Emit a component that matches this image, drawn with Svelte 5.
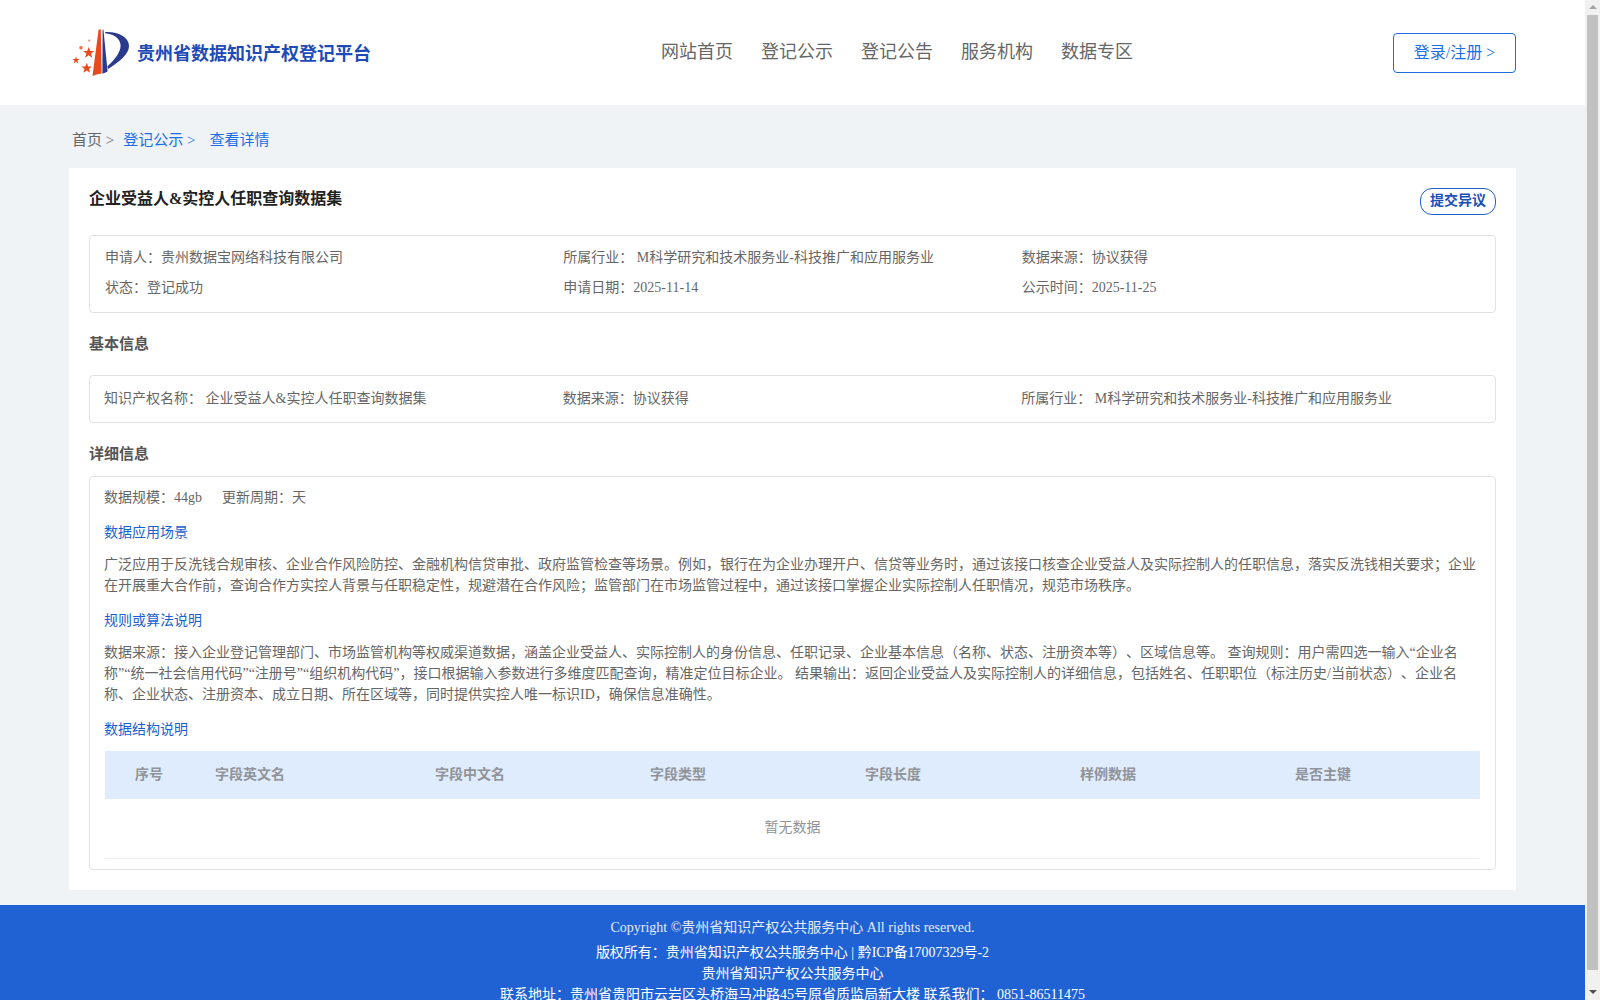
<script>
  const navItems = ['网站首页', '登记公示', '登记公告', '服务机构', '数据专区'];

  const summary = [
    { label: '申请人：', value: '贵州数据宝网络科技有限公司' },
    { label: '所属行业：', value: ' M科学研究和技术服务业-科技推广和应用服务业' },
    { label: '数据来源：', value: '协议获得' },
    { label: '状态：', value: '登记成功' },
    { label: '申请日期：', value: '2025-11-14' },
    { label: '公示时间：', value: '2025-11-25' }
  ];

  const basics = [
    { label: '知识产权名称：', value: ' 企业受益人&实控人任职查询数据集' },
    { label: '数据来源：', value: '协议获得' },
    { label: '所属行业：', value: ' M科学研究和技术服务业-科技推广和应用服务业' }
  ];

  const columns = ['序号', '字段英文名', '字段中文名', '字段类型', '字段长度', '样例数据', '是否主键'];
</script>

<div class="window">
  <div class="page">
    <header class="header">
      <a class="brand" href="#top">
        <svg class="logo" viewBox="70 26 62 54" aria-hidden="true">
          <g fill="#e8491d">
            <path d="M98.6 29.5 L100.8 29.5 L101.6 73.5 Q96 74 92.5 76 Z" />
            <path d="M88.7 47 L90.2 51 L94.4 51 L91 53.6 L92.3 57.8 L88.7 55.2 L85.1 57.8 L86.4 53.6 L83 51 L87.2 51 Z" />
            <path d="M76 56.4 L76.9 59 L79.6 59 L77.4 60.7 L78.2 63.4 L76 61.8 L73.8 63.4 L74.6 60.7 L72.4 59 L75.1 59 Z" />
            <path d="M86.7 63 L88.1 66.6 L91.9 66.6 L88.9 69 L90 72.8 L86.7 70.6 L83.4 72.8 L84.5 69 L81.5 66.6 L85.3 66.6 Z" />
            <circle cx="81" cy="47.7" r="1.8" opacity="0.8" />
            <circle cx="89.3" cy="40.7" r="1.1" opacity="0.6" />
          </g>
          <g fill="#2a3a8f">
            <path d="M102.6 29.5 L103.4 29.5 L107.6 71.5 Q105 72.8 102.4 73.8 Z" />
            <path d="M105.2 32 C119 31.4 129 37.4 129 46 C129 54.5 118.5 62.5 108 69 L107.4 66.6 C114.4 60 120.6 52.6 120.6 45.6 C120.6 38.6 113.5 33.8 105.2 33.2 Z" />
          </g>
        </svg>
        <span class="brand-name">贵州省数据知识产权登记平台</span>
      </a>
      <nav class="nav">
        {#each navItems as item}
          <a href="#top">{item}</a>
        {/each}
      </nav>
      <a class="login" href="#top">登录/注册 &gt;</a>
    </header>

    <main class="main">
      <div class="crumbs">
        <span class="crumb-home">首页 &gt;</span>
        <a href="#top">登记公示 &gt;</a>
        <a href="#top">查看详情</a>
      </div>

      <section class="card">
        <div class="card-head">
          <h1>企业受益人&amp;实控人任职查询数据集</h1>
          <button type="button" class="dispute">提交异议</button>
        </div>

        <div class="box summary">
          {#each summary as item}
            <div>{item.label}{item.value}</div>
          {/each}
        </div>

        <h2 class="first">基本信息</h2>
        <div class="box basics">
          {#each basics as item}
            <div>{item.label}{item.value}</div>
          {/each}
        </div>

        <h2 class="second">详细信息</h2>
        <div class="box detail">
          <div class="meta">
            <span>数据规模：44gb</span>
            <span>更新周期：天</span>
          </div>

          <h3>数据应用场景</h3>
          <p>广泛应用于反洗钱合规审核、企业合作风险防控、金融机构信贷审批、政府监管检查等场景。例如，银行在为企业办理开户、信贷等业务时，通过该接口核查企业受益人及实际控制人的任职信息，落实反洗钱相关要求；企业在开展重大合作前，查询合作方实控人背景与任职稳定性，规避潜在合作风险；监管部门在市场监管过程中，通过该接口掌握企业实际控制人任职情况，规范市场秩序。</p>

          <h3>规则或算法说明</h3>
          <p>数据来源：接入企业登记管理部门、市场监管机构等权威渠道数据，涵盖企业受益人、实际控制人的身份信息、任职记录、企业基本信息（名称、状态、注册资本等）、区域信息等。 查询规则：用户需四选一输入“企业名称”“统一社会信用代码”“注册号”“组织机构代码”，接口根据输入参数进行多维度匹配查询，精准定位目标企业。 结果输出：返回企业受益人及实际控制人的详细信息，包括姓名、任职职位（标注历史/当前状态）、企业名称、企业状态、注册资本、成立日期、所在区域等，同时提供实控人唯一标识ID，确保信息准确性。</p>

          <h3>数据结构说明</h3>
          <div class="table">
            <div class="table-head">
              {#each columns as col}
                <div>{col}</div>
              {/each}
            </div>
            <div class="table-empty">暂无数据</div>
          </div>
        </div>
      </section>
    </main>

    <footer class="footer">
      <div class="copyright">Copyright ©贵州省知识产权公共服务中心 All rights reserved.</div>
      <div>版权所有：贵州省知识产权公共服务中心 | 黔ICP备17007329号-2</div>
      <div>贵州省知识产权公共服务中心</div>
      <div>联系地址：贵州省贵阳市云岩区头桥海马冲路45号原省质监局新大楼 联系我们： 0851-86511475</div>
    </footer>
  </div>

  <!-- page scrollbar as the browser drew it -->
  <div class="scrollbar" aria-hidden="true">
    <span class="arrow up"></span>
    <span class="thumb"></span>
    <span class="arrow down"></span>
  </div>
</div>

<style>
  :global(body) {
    margin: 0;
    overflow: hidden;
    font-family: "Liberation Serif", "Noto Sans CJK SC", serif;
    font-size: 14px;
    line-height: 21px;
    color: #666;
    text-spacing-trim: space-all;
  }

  a {
    color: inherit;
    text-decoration: none;
  }

  .window {
    display: flex;
    height: 1000px;
  }

  .page {
    flex: 1;
    min-width: 0;
    overflow: hidden;
    background: #eff3f6;
  }

  .header {
    display: flex;
    align-items: center;
    height: 105px;
    padding: 0 69px;
    background: #fff;
  }

  .brand {
    display: flex;
    align-items: center;
    width: 592px;
  }

  .logo {
    width: 62px;
    height: 54px;
    margin-left: 1px;
    margin-right: 5px;
    flex: none;
  }

  .brand-name {
    padding-top: 3px;
    font-size: 18px;
    font-weight: 700;
    color: #1d4cb8;
  }

  .nav {
    display: flex;
    flex: 1;
    gap: 28px;
    font-size: 18px;
    color: #666;
  }

  .login {
    display: flex;
    align-items: center;
    justify-content: center;
    box-sizing: border-box;
    width: 123px;
    height: 40px;
    border: 1px solid #1f6ae0;
    border-radius: 4px;
    font-size: 16px;
    color: #1a6fe8;
  }

  .main {
    padding: 0 69px 15px;
  }

  .crumbs {
    display: flex;
    gap: 9px;
    box-sizing: border-box;
    height: 63px;
    align-items: center;
    padding: 8px 0 0 3px;
    font-size: 15px;
    color: #1a6fe8;
  }

  .crumb-home {
    color: #666;
  }

  .crumbs a + a {
    margin-left: 5px;
  }

  .card {
    padding: 20px 20px 20px;
    background: #fff;
  }

  .card-head {
    display: flex;
    justify-content: space-between;
    align-items: flex-start;
    height: 27px;
    margin-bottom: 20px;
  }

  h1 {
    margin: 0;
    font-size: 16px;
    line-height: 22px;
    font-weight: 700;
    color: #222;
  }

  .dispute {
    box-sizing: border-box;
    width: 76px;
    height: 27px;
    padding: 0 0 2px;
    border: 1px solid #1f5fd0;
    border-radius: 12px;
    background: #fff;
    font: 700 14px/23px "Liberation Serif", "Noto Sans CJK SC", serif;
    color: #1a4fb5;
  }

  .box {
    border: 1px solid #e0e2e6;
    border-radius: 4px;
  }

  .summary {
    display: grid;
    grid-template-columns: repeat(3, 1fr);
    row-gap: 9px;
    padding: 11px 15px 14px;
  }

  h2 {
    margin: 0;
    font-size: 15px;
    line-height: 22px;
    font-weight: 700;
    color: #555;
  }

  h2.first {
    margin: 20px 0 20px;
  }

  h2.second {
    margin: 20px 0 11px;
  }

  .basics {
    display: grid;
    grid-template-columns: repeat(3, 1fr);
    padding: 12px 15px 13px 14px;
  }

  .detail {
    padding: 10px 15px 10px 14px;
  }

  .meta {
    display: flex;
    gap: 20px;
  }

  h3 {
    margin: 14px 0 11px;
    font-size: 14px;
    line-height: 21px;
    font-weight: 400;
    color: #1a5fd0;
  }

  p {
    margin: 0;
  }

  .table {
    margin-left: 1px;
    border-bottom: 1px solid #ebeef5;
  }

  .table-head {
    display: grid;
    grid-template-columns: 110px 220px repeat(4, 215px) 1fr;
    align-items: center;
    height: 46px;
    padding-bottom: 2px;
    background: #dfecfd;
    font-weight: 700;
    color: #909399;
  }

  .table-head div:first-child {
    padding-left: 30px;
  }

  .table-empty {
    height: 59px;
    line-height: 57px;
    text-align: center;
    color: #909399;
  }

  .footer {
    height: 95px;
    padding-top: 12px;
    background: #2062d4;
    text-align: center;
    color: #fff;
  }

  .copyright {
    margin-bottom: 4px;
    color: #e4ecfa;
  }

  .scrollbar {
    display: flex;
    flex-direction: column;
    align-items: center;
    flex: none;
    width: 15px;
    background: #f1f1f1;
  }

  .thumb {
    flex: 1;
    width: 11px;
    background: #c1c1c1;
  }

  .arrow {
    flex: none;
    width: 0;
    height: 0;
    border-left: 4px solid transparent;
    border-right: 4px solid transparent;
  }

  .arrow.up {
    margin: 5px 0 6px;
    border-bottom: 4px solid #a3a3a3;
  }

  .arrow.down {
    margin: 20px 0 6px;
    border-top: 4px solid #505050;
  }
</style>
